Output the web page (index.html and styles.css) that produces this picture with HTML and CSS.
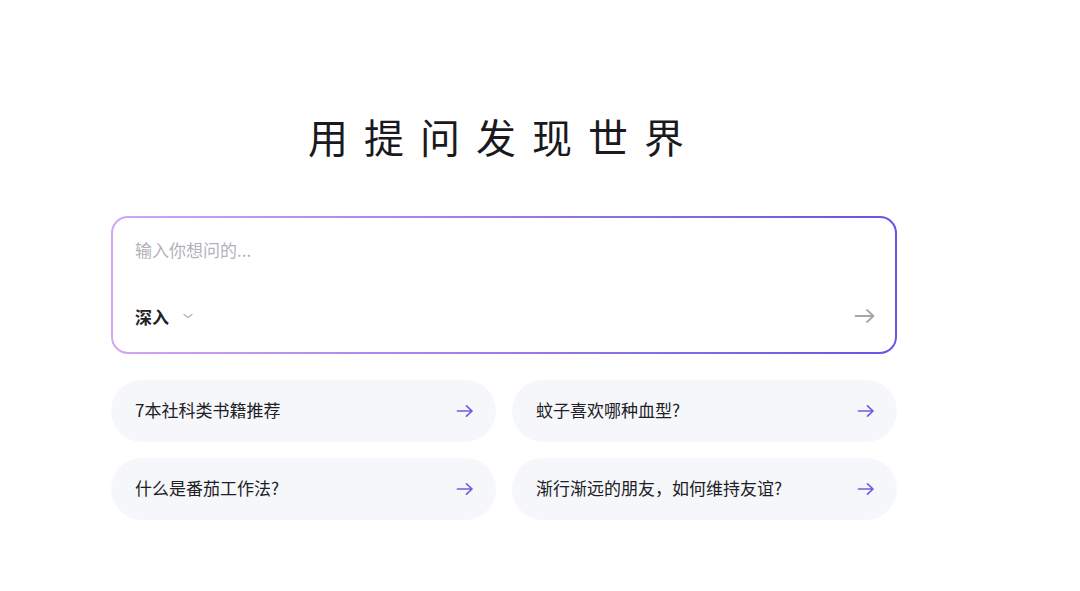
FILE: index.html
```html
<!DOCTYPE html>
<html lang="zh-CN">
<head>
<meta charset="utf-8">
<title>用提问发现世界</title>
<link rel="stylesheet" href="styles.css">
</head>
<body>
<main class="page">
  <h1 class="title">用提问发现世界</h1>
  <section class="ask">
    <div class="placeholder">输入你想问的...</div>
    <div class="ask-bar">
      <div class="mode">深入
        <svg class="chev" width="12" height="8" viewBox="0 0 12 8"><path d="M2 2.5 L6 5.5 L10 2.5" fill="none" stroke="#b4b4b8" stroke-width="1.3" stroke-linecap="round" stroke-linejoin="round"/></svg>
      </div>
      <svg class="send" width="22" height="16" viewBox="0 0 22 16"><path d="M1.5 8 H19.5 M13 2 L19.5 8 L13 14" fill="none" stroke="#a6a6aa" stroke-width="1.8" stroke-linecap="round" stroke-linejoin="round"/></svg>
    </div>
  </section>
  <section class="suggest">
    <div class="card"><span>7本社科类书籍推荐</span><svg class="go" width="18" height="14" viewBox="0 0 18 14"><path d="M1.5 7 H16 M10.5 1.8 L16 7 L10.5 12.2" fill="none" stroke="#6e5ce6" stroke-width="1.7" stroke-linecap="round" stroke-linejoin="round"/></svg></div>
    <div class="card"><span>蚊子喜欢哪种血型?</span><svg class="go" width="18" height="14" viewBox="0 0 18 14"><path d="M1.5 7 H16 M10.5 1.8 L16 7 L10.5 12.2" fill="none" stroke="#6e5ce6" stroke-width="1.7" stroke-linecap="round" stroke-linejoin="round"/></svg></div>
    <div class="card"><span>什么是番茄工作法?</span><svg class="go" width="18" height="14" viewBox="0 0 18 14"><path d="M1.5 7 H16 M10.5 1.8 L16 7 L10.5 12.2" fill="none" stroke="#6e5ce6" stroke-width="1.7" stroke-linecap="round" stroke-linejoin="round"/></svg></div>
    <div class="card"><span>渐行渐远的朋友，如何维持友谊?</span><svg class="go" width="18" height="14" viewBox="0 0 18 14"><path d="M1.5 7 H16 M10.5 1.8 L16 7 L10.5 12.2" fill="none" stroke="#6e5ce6" stroke-width="1.7" stroke-linecap="round" stroke-linejoin="round"/></svg></div>
  </section>
</main>
</body>
</html>
```

FILE: styles.css
```css
html, body {
  margin: 0;
  padding: 0;
  background: #ffffff;
}
body {
  font-family: "Noto Sans CJK SC", "Noto Sans", "Liberation Sans", sans-serif;
  color: #1f1f24;
}
.page {
  width: 786px;
  margin-left: 111px;
  padding-top: 108px;
}
.title {
  margin: 0 0 52px 0;
  font-size: 40px;
  line-height: 56px;
  font-weight: 400;
  letter-spacing: 16px;
  text-align: center;
  color: #1a1a1e;
}
.ask {
  box-sizing: border-box;
  height: 138px;
  border: 2px solid transparent;
  border-radius: 17px;
  background:
    linear-gradient(#ffffff, #ffffff) padding-box,
    linear-gradient(90deg, #d2a6f3 0%, #9c7ae8 50%, #6455e4 100%) border-box;
  padding: 20px 22px 24px 22px;
  display: flex;
  flex-direction: column;
  justify-content: space-between;
}
.placeholder {
  font-size: 17px;
  line-height: 24px;
  color: #b2b2b8;
}
.ask-bar {
  display: flex;
  align-items: center;
  justify-content: space-between;
  height: 24px;
}
.mode {
  display: flex;
  align-items: center;
  gap: 13px;
  font-size: 17px;
  font-weight: 600;
  color: #222226;
}
.chev {
  display: block;
}
.send {
  display: block;
  margin-right: -3px;
}
.suggest {
  margin-top: 26px;
  display: grid;
  grid-template-columns: 1fr 1fr;
  gap: 16px;
}
.card {
  height: 62px;
  border-radius: 31px;
  background: #f6f7fb;
  display: flex;
  align-items: center;
  justify-content: space-between;
  padding: 0 22px 0 24px;
  font-size: 17px;
  line-height: 22px;
  color: #202024;
}
.card span {
  margin-top: -2px;
}
.go {
  display: block;
}
```
